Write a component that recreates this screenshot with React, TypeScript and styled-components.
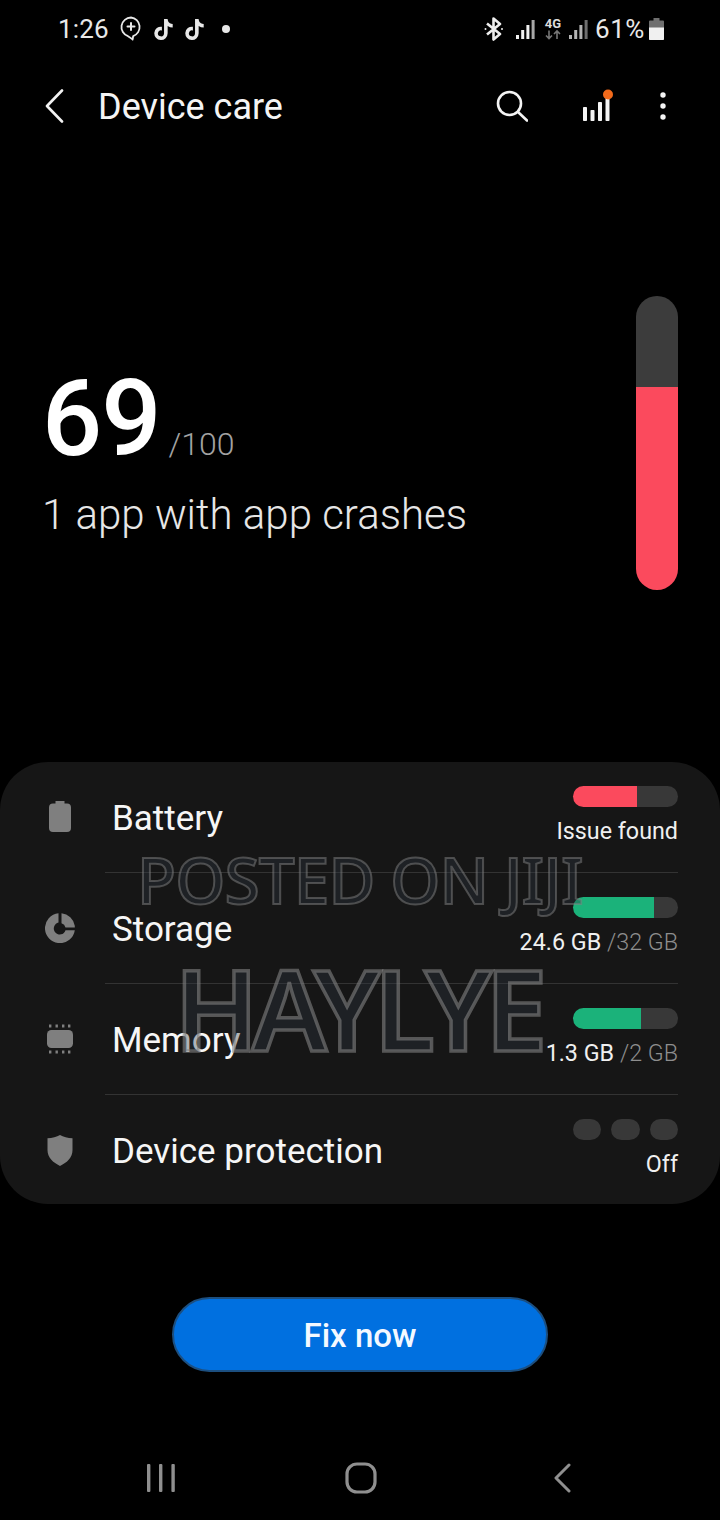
import React from "react";
import styled, { createGlobalStyle } from "styled-components";
import { FaTiktok } from "react-icons/fa";

const GlobalStyle = createGlobalStyle`
  html, body {
    margin: 0;
    padding: 0;
    background: #000;
  }
  body {
    font-family: Roboto, "Liberation Sans", sans-serif;
    color: #fff;
  }
`;

const Screen = styled.div`
  width: 720px;
  height: 1520px;
  background: #000;
  display: flex;
  flex-direction: column;
  overflow: hidden;
`;

const StatusBar = styled.div`
  height: 58px;
  display: flex;
  align-items: center;
  justify-content: space-between;
  padding: 0 56px 0 58px;
  color: #e8e8e8;
`;

const StatusGroup = styled.div`
  display: flex;
  align-items: center;
`;

const StatusSlot = styled.span<{ $gap: number }>`
  display: flex;
  margin-left: ${(p) => p.$gap}px;
`;

const Clock = styled.span`
  font-size: 26px;
  letter-spacing: 0.2px;
  margin-right: 11px;
`;

const TikTok = styled(FaTiktok)`
  width: 19px;
  height: 21px;
  margin-left: 12px;
  color: #e8e8e8;
`;

const StatusDot = styled.span`
  width: 8px;
  height: 8px;
  border-radius: 50%;
  background: #e8e8e8;
  margin-left: 18px;
`;

const Percent = styled.span`
  font-size: 26px;
  letter-spacing: 0.6px;
  margin: 0 4px 0 7px;
`;

const Header = styled.header`
  height: 96px;
  display: flex;
  align-items: center;
  padding: 0 54px 0 44px;
`;

const Title = styled.h1`
  margin: 2px 0 0 34px;
  flex: 1;
  font-size: 36px;
  font-weight: 400;
  color: #f4f4f4;
`;

const HeaderActions = styled.div`
  display: flex;
  align-items: center;
  gap: 47px;
`;

const SearchSlot = styled.span`
  display: flex;
  margin-right: 8px;
`;

const Hero = styled.section`
  height: 608px;
  display: flex;
  justify-content: space-between;
  align-items: flex-start;
  padding: 142px 42px 0 42px;
  box-sizing: border-box;
`;

const ScoreBlock = styled.div`
  padding-top: 61px;
`;

const ScoreLine = styled.div`
  display: flex;
  align-items: baseline;
  height: 125px;
`;

const Score = styled.span`
  font-size: 106px;
  font-weight: 500;
  line-height: 125px;
  letter-spacing: -1px;
`;

const ScoreMax = styled.span`
  font-size: 32px;
  font-weight: 300;
  color: #a2a2a2;
  margin-left: 8px;
`;

const Summary = styled.p`
  margin: 9px 0 0;
  font-size: 42px;
  font-weight: 300;
  color: #e6e6e6;
  line-height: 48px;
`;

const ScoreBar = styled.div<{ $level: number }>`
  width: 42px;
  height: 294px;
  border-radius: 21px;
  overflow: hidden;
  background: linear-gradient(
    to top,
    #fb4a5d ${(p) => p.$level}%,
    #3c3c3c ${(p) => p.$level}%
  );
`;

const Card = styled.section`
  position: relative;
  height: 442px;
  border-radius: 48px;
  background: #161616;
`;

const Row = styled.div`
  height: 111px;
  display: grid;
  grid-template-columns: 105px 1fr;
  padding-right: 42px;
  box-sizing: border-box;
`;

const IconCell = styled.div`
  display: flex;
  align-items: center;
  justify-content: center;
  padding-left: 15px;
  padding-bottom: 1px;
`;

const RowBody = styled.div<{ $last?: boolean }>`
  display: flex;
  justify-content: space-between;
  padding-left: 7px;
  border-bottom: 1px solid ${(p) => (p.$last ? "transparent" : "#333")};
`;

const RowLabel = styled.span`
  align-self: center;
  font-size: 35px;
  color: #f6f6f6;
  padding-top: 2px;
`;

const RowStatus = styled.div`
  display: flex;
  flex-direction: column;
  align-items: flex-end;
  padding-top: 24px;
`;

const Meter = styled.div<{ $color: string; $fill: number }>`
  width: 105px;
  height: 21px;
  border-radius: 11px;
  background: linear-gradient(
    to right,
    ${(p) => p.$color} ${(p) => p.$fill}px,
    #383838 ${(p) => p.$fill}px
  );
`;

const Pills = styled.div`
  width: 105px;
  display: flex;
  gap: 10px;
`;

const Pill = styled.span`
  flex: 1;
  height: 21px;
  border-radius: 11px;
  background: #383838;
`;

const StatusText = styled.div`
  margin-top: 9px;
  font-size: 23.3px;
  line-height: 30px;
  color: #f0f0f0;
`;

const Total = styled.span`
  color: #8e8e8e;
  font-weight: 300;
`;

const Watermark = styled.div<{
  $size: number;
  $top: number;
  $left: number;
  $weight: number;
  $spacing: number;
  $stroke: number;
  $alpha: number;
}>`
  position: absolute;
  top: ${(p) => p.$top}px;
  left: ${(p) => p.$left}px;
  font-family: "Noto Sans", "Open Sans", sans-serif;
  font-size: ${(p) => p.$size}px;
  font-weight: ${(p) => p.$weight};
  letter-spacing: ${(p) => p.$spacing}px;
  line-height: 1;
  white-space: nowrap;
  color: rgba(45, 55, 65, 0.35);
  -webkit-text-stroke: ${(p) => p.$stroke}px rgba(130, 130, 130, ${(p) => p.$alpha});
  pointer-events: none;
`;

const Footer = styled.div`
  display: flex;
  justify-content: center;
  padding-top: 93px;
`;

const FixButton = styled.button`
  width: 376px;
  height: 75px;
  border: 2px solid #1c4f80;
  border-radius: 38px;
  background: #0070e0;
  color: #f4f9ff;
  font-family: inherit;
  font-size: 33px;
  font-weight: 500;
  padding-top: 3px;
`;

const NavBar = styled.nav`
  margin-top: 85px;
  display: flex;
  align-items: center;
  justify-content: space-between;
  height: 42px;
  padding: 0 149px 0 147px;
`;

const HomeSlot = styled.span`
  display: flex;
  margin-right: 6px;
`;

const Back = () => (
  <svg width="20" height="34" viewBox="0 0 20 34" fill="none">
    <path d="M18 1.5 3 17l15 15.5" stroke="#f2f2f2" strokeWidth="2.6" strokeLinecap="round" strokeLinejoin="round" />
  </svg>
);

const Search = () => (
  <svg width="32" height="32" viewBox="0 0 32 32" fill="none" stroke="#f4f4f4" strokeWidth="2.6" strokeLinecap="round">
    <circle cx="13.5" cy="13.5" r="11.5" />
    <path d="m22 22 9 8.5" />
  </svg>
);

const Bars = () => (
  <svg width="30" height="34" viewBox="0 0 30 34" fill="none">
    <g fill="#f4f4f4">
      <rect x="0" y="18" width="4" height="14" rx="0.8" />
      <rect x="7.5" y="21" width="4" height="11" rx="0.8" />
      <rect x="15" y="13" width="4" height="19" rx="0.8" />
      <rect x="22.5" y="8" width="4" height="24" rx="0.8" />
    </g>
    <circle cx="25" cy="5.5" r="5" fill="#f26a1b" />
  </svg>
);

const Kebab = () => (
  <svg width="6" height="30" viewBox="0 0 6 30" fill="#f4f4f4">
    <circle cx="3" cy="4" r="2.7" />
    <circle cx="3" cy="15" r="2.7" />
    <circle cx="3" cy="26" r="2.7" />
  </svg>
);

const ChatPlus = () => (
  <svg width="22" height="26" viewBox="0 0 22 26" fill="none" stroke="#e8e8e8" strokeWidth="1.8" strokeLinecap="round">
    <path d="M11 1.5a9.6 9.6 0 0 0-3 18.7c1.5.7 3 2.2 4.6 3.3.5-1.2.2-2.3.6-3.4A9.6 9.6 0 0 0 11 1.5Z" />
    <path d="M11 7v7M7.5 10.5h7" strokeWidth="2" />
  </svg>
);

const Bluetooth = () => (
  <svg width="20" height="24" viewBox="0 0 20 24" fill="none" stroke="#eee" strokeWidth="2.6">
    <path d="m3 6.5 13 10.5-6.5 5.5V1.5L16 7 3 17.5" strokeLinejoin="round" />
    <circle cx="1.5" cy="12" r="1" fill="#eee" stroke="none" />
    <circle cx="18" cy="12" r="1" fill="#eee" stroke="none" />
  </svg>
);

const Signal = ({ dim }: { dim?: boolean }) => (
  <svg width="19" height="21" viewBox="0 0 19 21" fill={dim ? "#b4b4b4" : "#f0f0f0"}>
    <rect x="0" y="16" width="3" height="4" />
    <rect x="5.2" y="11" width="3" height="9" />
    <rect x="10.4" y="6" width="3" height="14" />
    <rect x="15.6" y="1" width="3" height="19" fill={dim ? "#6e6e6e" : "#a8a8a8"} />
  </svg>
);

const FourG = () => (
  <svg width="18" height="24" viewBox="0 0 18 24">
    <text x="9" y="11" textAnchor="middle" fontFamily="Roboto, sans-serif" fontSize="13" fontWeight="700" fill="#dcdcdc">
      4G
    </text>
    <path d="M5 13.5v8m-3-3 3 3 3-3M13 22v-8m-3 3 3-3 3 3" fill="none" stroke="#777" strokeWidth="1.6" />
  </svg>
);

const BatteryStatus = () => (
  <svg width="15" height="22" viewBox="0 0 15 22">
    <path d="M4.5 0h6v2.5H14a1 1 0 0 1 1 1V21a1 1 0 0 1-1 1H1a1 1 0 0 1-1-1V3.5a1 1 0 0 1 1-1h3.5Z" fill="#6f6f6f" />
    <path d="M0 9.5h15V21a1 1 0 0 1-1 1H1a1 1 0 0 1-1-1Z" fill="#f0f0f0" />
  </svg>
);

const BatteryIcon = () => (
  <svg width="24" height="32" viewBox="0 0 24 32" fill="#7f7f7f">
    <path d="M7.5 0h9v2.5H19a4 4 0 0 1 4 4V27a4 4 0 0 1-4 4H5a4 4 0 0 1-4-4V6.5a4 4 0 0 1 4-4h2.5Z" />
  </svg>
);

const StorageIcon = () => (
  <svg width="30" height="30" viewBox="0 0 30 30" fill="#7f7f7f">
    <path d="M13.5 0.2v9.4a6 6 0 1 0 7 7.7h9.3A15 15 0 1 1 13.5 0.2Z" />
    <path d="M16.5 0.2A15 15 0 0 1 29.8 12.8v1.7h-9.3a6 6 0 0 0-4-4.3Z" />
  </svg>
);

const MemoryIcon = () => (
  <svg width="28" height="30" viewBox="0 0 28 30" fill="#7f7f7f">
    <rect x="1" y="6" width="26" height="18" rx="4.5" />
    {[4, 10.5, 17, 23].map((x) => (
      <React.Fragment key={x}>
        <rect x={x - 1} y="0.5" width="2.4" height="3" />
        <rect x={x - 1} y="26.5" width="2.4" height="3" />
      </React.Fragment>
    ))}
  </svg>
);

const ShieldIcon = () => (
  <svg width="26" height="31" viewBox="0 0 26 31" fill="#7f7f7f">
    <path d="M13 0c3.2 1.8 7.8 3 12.500 3.3V15c0 7.500-5.500 12.500-12.500 16C6 27.500.5 22.500.5 15V3.3C5.200 3 9.800 1.800 13 0Z" />
  </svg>
);

const NavRecent = () => (
  <svg width="28" height="28" viewBox="0 0 28 28" fill="#8f8f8f">
    <rect x="0" y="0" width="3.4" height="28" rx="1" />
    <rect x="12" y="0" width="3.4" height="28" rx="1" />
    <rect x="24.4" y="0" width="3.4" height="28" rx="1" />
  </svg>
);

const NavHome = () => (
  <svg width="32" height="32" viewBox="0 0 32 32" fill="none">
    <rect x="2" y="2" width="28" height="28" rx="10" stroke="#8f8f8f" strokeWidth="3.2" />
  </svg>
);

const NavBack = () => (
  <svg width="18" height="30" viewBox="0 0 18 30" fill="none">
    <path d="M16 2 3 15l13 13" stroke="#8f8f8f" strokeWidth="3" strokeLinecap="round" strokeLinejoin="round" />
  </svg>
);

export default function App() {
  return (
    <Screen>
      <GlobalStyle />
      <StatusBar>
        <StatusGroup>
          <Clock>1:26</Clock>
          <ChatPlus />
          <TikTok />
          <TikTok />
          <StatusDot />
        </StatusGroup>
        <StatusGroup>
          <Bluetooth />
          <StatusSlot $gap={12}>
            <Signal />
          </StatusSlot>
          <StatusSlot $gap={9}>
            <FourG />
          </StatusSlot>
          <StatusSlot $gap={7}>
            <Signal dim />
          </StatusSlot>
          <Percent>61%</Percent>
          <BatteryStatus />
        </StatusGroup>
      </StatusBar>

      <Header>
        <Back />
        <Title>Device care</Title>
        <HeaderActions>
          <SearchSlot>
            <Search />
          </SearchSlot>
          <Bars />
          <Kebab />
        </HeaderActions>
      </Header>

      <Hero>
        <ScoreBlock>
          <ScoreLine>
            <Score>69</Score>
            <ScoreMax>/100</ScoreMax>
          </ScoreLine>
          <Summary>1 app with app crashes</Summary>
        </ScoreBlock>
        <ScoreBar $level={69} />
      </Hero>

      <Card>
        <Row>
          <IconCell>
            <BatteryIcon />
          </IconCell>
          <RowBody>
            <RowLabel>Battery</RowLabel>
            <RowStatus>
              <Meter $color="#fb4a5d" $fill={64} />
              <StatusText>Issue found</StatusText>
            </RowStatus>
          </RowBody>
        </Row>
        <Row>
          <IconCell>
            <StorageIcon />
          </IconCell>
          <RowBody>
            <RowLabel>Storage</RowLabel>
            <RowStatus>
              <Meter $color="#1bb27a" $fill={81} />
              <StatusText>
                24.6 GB <Total>/32 GB</Total>
              </StatusText>
            </RowStatus>
          </RowBody>
        </Row>
        <Row>
          <IconCell>
            <MemoryIcon />
          </IconCell>
          <RowBody>
            <RowLabel>Memory</RowLabel>
            <RowStatus>
              <Meter $color="#1bb27a" $fill={68} />
              <StatusText>
                1.3 GB <Total>/2 GB</Total>
              </StatusText>
            </RowStatus>
          </RowBody>
        </Row>
        <Row>
          <IconCell>
            <ShieldIcon />
          </IconCell>
          <RowBody $last>
            <RowLabel>Device protection</RowLabel>
            <RowStatus>
              <Pills>
                <Pill />
                <Pill />
                <Pill />
              </Pills>
              <StatusText>Off</StatusText>
            </RowStatus>
          </RowBody>
        </Row>
        <Watermark $size={64} $top={86} $left={137} $weight={500} $spacing={-0.9} $stroke={2} $alpha={0.5}>
          POSTED ON JIJI
        </Watermark>
        <Watermark $size={112} $top={190} $left={174} $weight={600} $spacing={-7} $stroke={3.5} $alpha={0.6}>
          HAYLYE
        </Watermark>
      </Card>

      <Footer>
        <FixButton>Fix now</FixButton>
      </Footer>

      <NavBar>
        <NavRecent />
        <HomeSlot>
          <NavHome />
        </HomeSlot>
        <NavBack />
      </NavBar>
    </Screen>
  );
}
